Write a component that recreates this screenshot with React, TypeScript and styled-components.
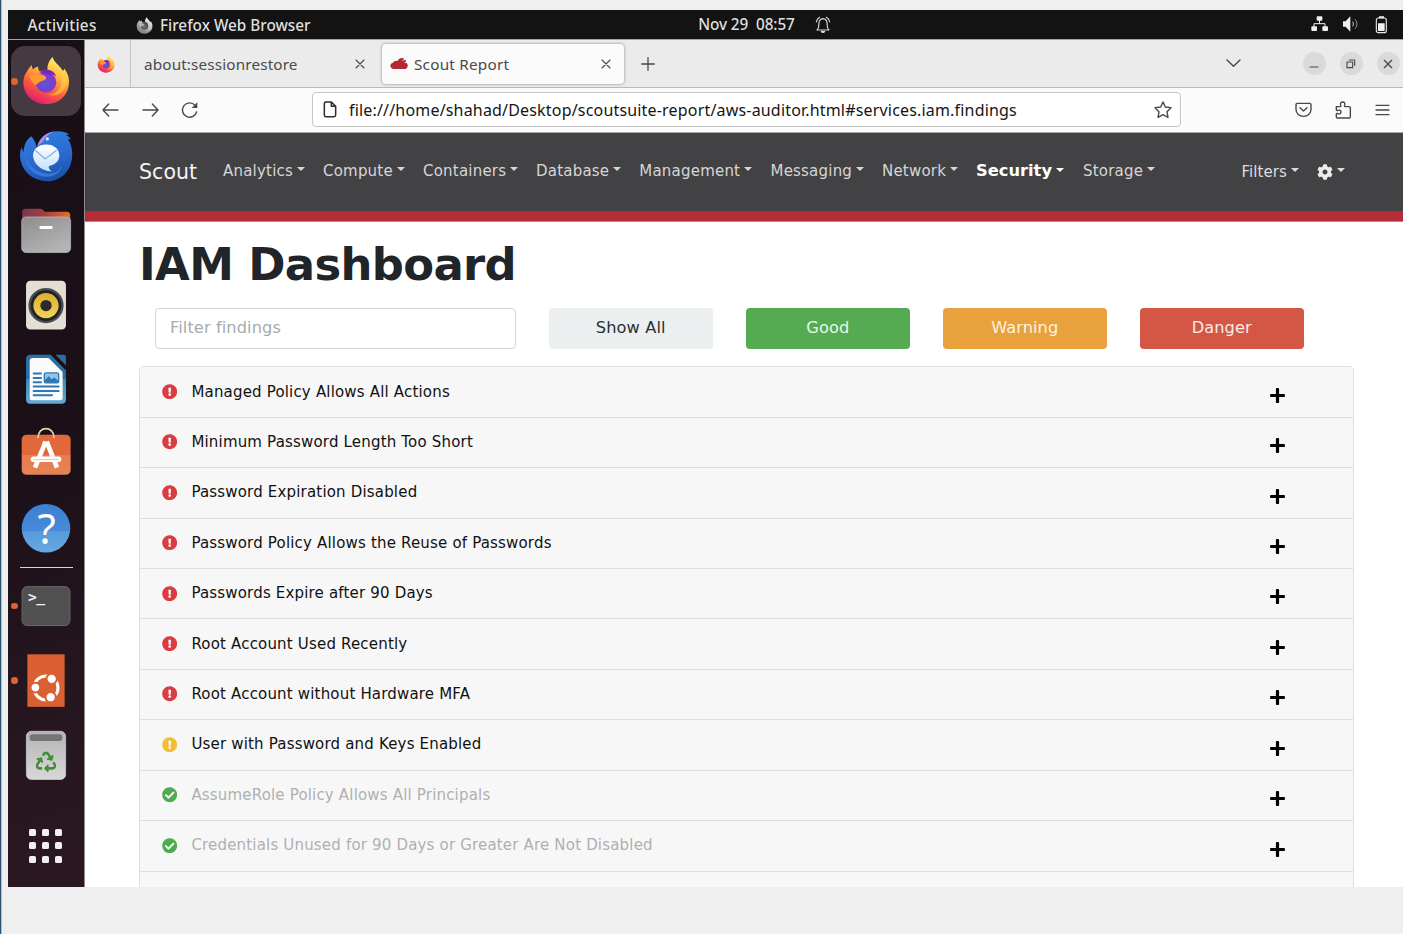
import React from "react";
import styled, { createGlobalStyle } from "styled-components";
import { FaCog, FaExclamationCircle, FaCheckCircle, FaPlus, FaRecycle } from "react-icons/fa";

const GlobalStyle = createGlobalStyle`
  * { box-sizing: border-box; }
  body { margin: 0; background: #fff; overflow: hidden; }
`;

const uiFont = `"Noto Sans", "Open Sans", sans-serif`;
const webFont = `"DejaVu Sans", sans-serif`;

/* ---------- frame ---------- */
const Page = styled.div`
  width: 1403px;
  height: 934px;
  padding: 10px 0 0 7px;
  border-left: 1px solid #2a5674;
  box-shadow: inset 1px 0 0 #b4c1ca;
  background: #efefef;
`;
const Desktop = styled.div`
  height: 877px;
  display: flex;
  flex-direction: column;
  overflow: hidden;
`;
const Label = styled.span<{ $ls?: number }>`
  letter-spacing: ${(p) => p.$ls ?? 0}px;
  white-space: pre;
`;

/* ---------- gnome top bar ---------- */
const TopBar = styled.header`
  flex: none;
  height: 30px;
  padding: 0 15px 1px 19.5px;
  display: grid;
  grid-template-columns: 108.5px 1fr auto auto 1fr;
  align-items: center;
  background: #131313;
  border-bottom: 1px solid #a3a3a3;
  color: #dfdfdf;
  font: 500 15.3px/28px ${uiFont};
`;
const AppName = styled.div`
  display: flex;
  align-items: center;
  gap: 7px;
`;
const Clock = styled.div`
  margin-left: 5px;
  padding-bottom: 2px;
`;
const Bell = styled.div`
  margin-left: 20px;
  display: flex;
`;
const Tray = styled.div`
  display: flex;
  justify-content: flex-end;
  gap: 15px;
`;

/* ---------- dock ---------- */
const Body = styled.div`
  flex: 1;
  min-height: 0;
  display: flex;
`;
const Dock = styled.nav`
  flex: none;
  width: 77px;
  padding-top: 4px;
  background: linear-gradient(160deg, #180e16 0%, #1b1018 45%, #24151f 75%, #2b1822 100%);
  border-right: 1px solid #8f8a8e;
`;
const Slot = styled.div`
  position: relative;
  width: 76px;
  height: 74.5px;
  svg { display: block; }
`;
const Highlight = styled.div`
  position: absolute;
  left: 3px;
  top: 2px;
  width: 70px;
  height: 70px;
  border-radius: 14px;
  background: #453a42;
`;
const Glyph = styled.div`
  position: absolute;
  inset: 0;
`;
const RunDot = styled.i`
  position: absolute;
  left: 3px;
  top: 34px;
  width: 6.5px;
  height: 6.5px;
  border-radius: 50%;
  background: #e0622f;
`;
const Divider = styled.div`
  height: 1px;
  width: 53px;
  margin: 1.5px 0 0.8px 12px;
  background: #d7d3d6;
`;
const AppsGrid = styled.div`
  margin: 37px 0 0 21px;
  display: grid;
  grid-template-columns: repeat(3, 7px);
  gap: 6.2px;
  i { height: 7px; background: #f1eff0; border-radius: 1.6px; }
`;

/* ---------- firefox chrome ---------- */
const Browser = styled.main`
  flex: 1;
  min-width: 0;
  display: flex;
  flex-direction: column;
  background: #fff;
`;
const TabStrip = styled.div`
  flex: none;
  height: 48px;
  display: flex;
  align-items: center;
  background: #ebebeb;
  border-bottom: 1px solid #b9b9b9;
  color: #4a4a4b;
  font: 15.3px/20px ${uiFont};
`;
const PinnedTab = styled.div`
  width: 46px;
  height: 47px;
  padding: 0 0 0 12px;
  display: flex;
  align-items: center;
  border-right: 1px solid #c4c4c4;
`;
const Tab = styled.div<{ $active?: boolean }>`
  width: ${(p) => (p.$active ? 242 : 251)}px;
  height: 40px;
  padding: ${(p) => (p.$active ? "0 13px 0 8px" : "0 17px 0 13px")};
  display: flex;
  align-items: center;
  border-radius: 4px;
  background: ${(p) => (p.$active ? "#fbfbfb" : "transparent")};
  box-shadow: ${(p) => (p.$active ? "0 0 3px rgba(0,0,0,.45)" : "none")};
  svg:last-child { margin-left: auto; }
`;
const Favicon = styled.span`
  display: flex;
  margin-right: 6px;
`;
const NewTab = styled.div`
  display: flex;
  margin-left: 17px;
`;
const WindowTools = styled.div`
  margin-left: auto;
  margin-right: 3px;
  display: flex;
  align-items: center;
  gap: 13.5px;
`;
const TabsMenu = styled.div`
  display: flex;
  margin-right: 48.5px;
`;
const WindowButton = styled.div`
  width: 23.5px;
  height: 23.5px;
  border-radius: 50%;
  background: #dadada;
  display: flex;
  align-items: center;
  justify-content: center;
`;
const Toolbar = styled.div`
  flex: none;
  height: 45px;
  padding: 0 13px 1px 17px;
  display: flex;
  align-items: center;
  background: #fbfbfb;
  border-bottom: 1px solid #a6a6a7;
`;
const NavButtons = styled.div`
  display: flex;
  gap: 22.5px;
  width: 210px;
`;
const UrlBox = styled.div`
  width: 869px;
  height: 35px;
  padding: 0 8px 0 10px;
  display: flex;
  align-items: center;
  border: 1px solid #c6c6c6;
  border-radius: 4px;
  background: #fff;
  color: #151515;
  font: 16px/30px ${uiFont};
  svg:last-child { margin-left: auto; }
`;
const UrlText = styled.div`
  margin-left: 12px;
`;
const ToolbarEnd = styled.div`
  margin-left: auto;
  display: flex;
  align-items: center;
  gap: 23px;
`;

/* ---------- scout report ---------- */
const ScoutNav = styled.div`
  flex: none;
  height: 88px;
  padding: 0 58px 0 54px;
  display: flex;
  align-items: center;
  background: #424244;
  border-bottom: 10px solid #b42c35;
  box-shadow: 0 1px 0 #d27a80;
  color: #d6d6d6;
  font: 15px/20px ${webFont};
`;
const Brand = styled.div`
  width: 84px;
  padding-bottom: 1px;
  color: #f3f3f3;
  font-size: 20.5px;
`;
const NavItem = styled.div<{ $bold?: boolean; $w?: number }>`
  display: flex;
  align-items: center;
  flex: none;
  width: ${(p) => (p.$w ? p.$w + "px" : "auto")};
  padding-bottom: ${(p) => (p.$bold ? 2 : 3)}px;
  font-weight: ${(p) => (p.$bold ? 700 : 400)};
  font-size: ${(p) => (p.$bold ? 16.3 : 15)}px;
  color: ${(p) => (p.$bold ? "#fff" : "inherit")};
  &::after {
    content: "";
    margin: -3px 0 0 4px;
    border: 4.5px solid transparent;
    border-top-color: currentColor;
    border-bottom: 0;
  }
`;
const NavEnd = styled.div`
  margin-left: auto;
  display: flex;
  align-items: center;
  color: #dcdcdc;
  gap: 18px;
  > div { padding-bottom: 1px; }
`;
const Content = styled.section`
  padding: 0 50px 0 54px;
  font-family: ${webFont};
`;
const Title = styled.h1`
  margin: 15.5px 0 0;
  font: 700 44.9px/56px ${webFont};
  color: #212529;
`;
const FilterRow = styled.div`
  display: grid;
  grid-template-columns: 361px repeat(4, 164.5px);
  column-gap: 32.5px;
  margin: 15.5px 0 17.3px 16px;
  height: 41px;
`;
const SearchField = styled.div`
  padding: 0 14px 2px;
  display: flex;
  align-items: center;
  border: 1px solid #ced6da;
  border-radius: 4px;
  color: #a3acae;
  font-size: 16.2px;
`;
const FilterButton = styled.div<{ $bg: string; $fg: string }>`
  display: flex;
  align-items: center;
  justify-content: center;
  padding-bottom: 2px;
  border-radius: 4px;
  background: ${(p) => p.$bg};
  color: ${(p) => p.$fg};
  font-size: 16.2px;
`;
const FindingList = styled.div`
  width: 1215px;
  border: 1px solid #dfdfdf;
  border-radius: 4px;
`;
const Finding = styled.div<{ $muted?: boolean }>`
  height: 50.43px;
  padding: 0 67.5px 1px 22px;
  display: flex;
  align-items: center;
  background: #f7f7f7;
  border-bottom: 1px solid #dfdfdf;
  font-size: 15px;
  color: ${(p) => (p.$muted ? "#b0b0b0" : "#111")};
  > svg:last-child { margin: 7.5px 0 0 auto; }
`;
const FindingName = styled.div`
  margin-left: 14px;
`;

/* ---------- drawings ---------- */
const Firefox = ({ w, h, vb, gray, id }: { w: number; h: number; vb: string; gray?: boolean; id: string }) => (
  <svg width={w} height={h} viewBox={vb}>
    <defs>
      <linearGradient id={id + "Body"} x1="0.75" y1="0.05" x2="0.3" y2="1">
        <stop offset="0" stopColor={gray ? "#f2f2f2" : "#fff36a"} />
        <stop offset=".35" stopColor={gray ? "#c8c8c8" : "#ffb13b"} />
        <stop offset=".65" stopColor={gray ? "#9a9a9a" : "#fb5b3f"} />
        <stop offset="1" stopColor={gray ? "#808080" : "#e01a72"} />
      </linearGradient>
      <radialGradient id={id + "Globe"} cx=".45" cy=".6" r=".65">
        <stop offset="0" stopColor={gray ? "#777" : "#5d55d8"} />
        <stop offset="1" stopColor={gray ? "#3a3a3a" : "#8b2fc9"} />
      </radialGradient>
    </defs>
    <path fill={`url(#${id}Body)`} d="M-68 4C-68-18-57-32-43-49Q-42-40-39-36-32-42-24-44-24-36-20-30C-12-33-3-33 5-31 2-48 10-64 20-73 24-56 40-50 49-33 54-30 55-37 55-38 68-20 70-6 69 6 67 44 36 69 1 69-38 69-68 42-68 4Z" />
    <circle cx="0" cy="3" r="31" fill={`url(#${id}Globe)`} />
    <path fill={gray ? "#555" : "#7a25bd"} d="M-20-27C-2-42 26-34 31-14 20-25 8-20 0-21Z" />
    <path fill={gray ? "#b5b5b5" : "#ff9a2b"} d="M-50-18C-38-22-22-20-19-20-10-21 0-15 1-10-2-2-14-1-19 2-26 6-27 9-31 12-42 6-48-8-50-18Z" />
    <path fill={gray ? "#ddd" : "#ffd548"} opacity=".55" d="M20-68C24-50 50-34 48 2 44 28 22 42 4 40 40 52 66 24 62-10 54-36 28-50 20-68Z" />
  </svg>
);

const DVB = "-114 -112 228 224";
const DockSvg = ({ children }: { children: React.ReactNode }) => (
  <svg width="76" height="74.5" viewBox={DVB}>{children}</svg>
);

const Thunderbird = () => (
  <DockSvg>
    <defs>
      <linearGradient id="bird" x1=".3" y1="0" x2=".6" y2="1">
        <stop offset="0" stopColor="#2f7fe0" /><stop offset=".6" stopColor="#2a68cf" /><stop offset="1" stopColor="#1b4fa3" />
      </linearGradient>
      <linearGradient id="envelope" x1="0" y1="0" x2="0" y2="1">
        <stop offset="0" stopColor="#fff" /><stop offset="1" stopColor="#bfe0fb" />
      </linearGradient>
    </defs>
    <path fill="url(#bird)" d="M-27-22C-24-48-4-73 30-75 44-76 60-73 70-66L60-64Q70-60 75-50L66-52C84-26 82 14 68 38 52 66 24 76 2 75-34 74-62 54-73 24-80 4-79-12-74-27L-68-12C-66-36-58-50-44-60-36-50-30-40-27-22Z" />
    <path fill="#a78bf0" d="M-27-28C-20-56 2-73 24-74 8-68-4-56-8-44-14-40-20-36-27-28Z" />
    <path fill="#3f86e4" opacity=".7" d="M-62-6C-58 24-36 46-2 52 30 54 46 40 50 20 48 46 30 60 2 62-36 60-62 34-62-6Z" />
    <path fill="url(#envelope)" d="M0-35C26-35 40-20 40-2 40 16 26 26 8 30 8 38 12 42 18 46-14 44-38 24-39-2-38-22-22-35 0-35Z" />
    <path fill="none" stroke="#8ab4dc" strokeWidth="4" d="M-32-18Q-10 2-2 8 6 2 32-18" />
    <circle cx="4" cy="-52" r="5" fill="#cde8ff" />
  </DockSvg>
);

const Files = () => (
  <DockSvg>
    <defs>
      <linearGradient id="folder" x1="0" x2="1"><stop offset="0" stopColor="#793452" /><stop offset=".5" stopColor="#a6423d" /><stop offset="1" stopColor="#ec6a30" /></linearGradient>
      <linearGradient id="drawer" x1="0" x2=".6" y1="0" y2="1"><stop offset="0" stopColor="#8d8d8d" /><stop offset="1" stopColor="#b4b4b4" /></linearGradient>
    </defs>
    <path fill="url(#folder)" d="M-72-54Q-72-65-62-65H-16Q-10-65-4-56H62Q73-56 73-44V0H-72Z" />
    <rect x="-73" y="-40" width="147" height="107" rx="13" fill="url(#drawer)" stroke="#c2c2c2" strokeWidth="2" />
    <rect x="-20" y="-13" width="40" height="9" rx="4" fill="#fff" />
  </DockSvg>
);

const Rhythmbox = () => (
  <DockSvg>
    <defs><linearGradient id="cone" x1="0" x2="0" y1="0" y2="1"><stop offset="0" stopColor="#dcae30" /><stop offset="1" stopColor="#f2d457" /></linearGradient></defs>
    <rect x="-60" y="-74" width="120" height="147" rx="13" fill="#e3dfd5" />
    <circle cy="1" r="53" fill="#4b4d52" /><circle cy="1" r="46" fill="#20222a" />
    <circle cy="1" r="38" fill="url(#cone)" /><circle cy="1" r="17" fill="#2b2b2b" />
  </DockSvg>
);

const Writer = () => (
  <DockSvg>
    <defs><linearGradient id="writer" x1="0" x2="0" y1="0" y2="1"><stop offset=".5" stopColor="#276fa5" /><stop offset=".5" stopColor="#3e8abd" /><stop offset="1" stopColor="#62abd6" /></linearGradient></defs>
    <path fill="url(#writer)" d="M-48-74H14L60-26V60Q60 74 46 74H-46Q-60 74-60 60V-60Q-60-74-48-74Z" />
    <path fill="#fafafa" d="M-40-64H8L50-22V56Q50 63 43 63H-43Q-49 63-49 56V-55Q-49-64-40-64Z" />
    <path fill="#2c6da1" d="M28-74H54Q60-74 60-68V-42Z" />
    <path stroke="#2e77b5" strokeWidth="6" strokeLinecap="round" d="M-37-17H-15M-37-4H-15M-37 9H-15M-37 22H38M-37 35H38M-37 48H18" />
    <rect x="-5" y="-19" width="43" height="30" rx="5" fill="#8ec4ea" stroke="#2e77b5" strokeWidth="4" />
    <path fill="#2e77b5" d="M-3 10V2L8-9 17 0 25-5 36 4V10Z" />
  </DockSvg>
);

const Software = () => (
  <DockSvg>
    <defs><linearGradient id="bag" x1="0" x2="0" y1="0" y2="1"><stop offset=".5" stopColor="#e0683a" /><stop offset=".5" stopColor="#e67d50" /><stop offset="1" stopColor="#e68354" /></linearGradient></defs>
    <rect x="-73" y="-59" width="147" height="121" rx="15" fill="url(#bag)" />
    <path fill="none" stroke="#e8d3a4" strokeWidth="5" strokeLinecap="round" d="M-24-50C-24-86 24-86 24-50" />
    <path fill="none" stroke="#fff" strokeWidth="14" d="M-33 40-1-38M33 40 2-38" />
    <path fill="#fff" d="M-10-38H10V-26H-10Z" />
    <rect x="-46" y="7" width="92" height="16" rx="8" fill="#fff" />
    <path stroke="#ecc3b0" strokeWidth="3" d="M-38 16H38" />
  </DockSvg>
);

const HelpMark = styled.span`
  position: absolute;
  inset: 0 0 0 1px;
  display: flex;
  align-items: center;
  justify-content: center;
  color: #fff;
  font: 42px/1 ${uiFont};
`;
const Help = () => (
  <>
    <DockSvg>
      <defs><linearGradient id="help" x1="0" x2="0" y1="0" y2="1"><stop offset="0" stopColor="#3a80d3" /><stop offset=".55" stopColor="#478bd8" /><stop offset=".55" stopColor="#559adb" /><stop offset="1" stopColor="#66a9e1" /></linearGradient></defs>
      <circle r="73" fill="url(#help)" />
    </DockSvg>
    <HelpMark>?</HelpMark>
  </>
);

const Prompt = styled.span`
  position: absolute;
  left: 20px;
  top: 19px;
  color: #f2f2f2;
  font: 700 14.5px/18px "DejaVu Sans Mono", monospace;
  letter-spacing: -0.6px;
`;
const Terminal = () => (
  <>
    <DockSvg><rect x="-72" y="-59" width="144" height="117" rx="15" fill="#505050" stroke="#696969" strokeWidth="3" /></DockSvg>
    <Prompt>&gt;_</Prompt>
  </>
);

const UbuntuLogo = () => (
  <DockSvg>
    <rect x="-56" y="-78" width="112" height="158" fill="#da6033" />
    <g transform="translate(0 23)">
      <circle r="36" fill="none" stroke="#fff" strokeWidth="9" />
      <g stroke="#da6033" fill="#fff" strokeWidth="6">
        <circle cx="-32" cy="-1" r="14.500" /><circle cx="17" cy="-27" r="15.500" /><circle cx="14" cy="28" r="15.500" />
      </g>
    </g>
  </DockSvg>
);

const Trash = () => (
  <DockSvg>
    <defs><linearGradient id="bin" x1="0" x2="0" y1="0" y2="1"><stop offset="0" stopColor="#b4b4b4" /><stop offset="1" stopColor="#d8d8d8" /></linearGradient></defs>
    <rect x="-59" y="-72" width="118" height="145" rx="15" fill="url(#bin)" stroke="#dadada" strokeWidth="2" />
    <rect x="-49" y="-63" width="98" height="20" rx="8" fill="#757575" />
    <FaRecycle x="-31" y="-11" size={62} color="#3f9136" />
  </DockSvg>
);

/* thin outline glyph drawn on a 3x grid */
const Line = ({ w, h, d, sw = 4.2, c = "#48484a" }: { w: number; h: number; d: string; sw?: number; c?: string }) => (
  <svg width={w} height={h} viewBox={`0 0 ${w * 3} ${h * 3}`} fill="none" stroke={c} strokeWidth={sw} strokeLinecap="round" strokeLinejoin="round"><path d={d} /></svg>
);
const CloseX = () => <Line w={10} h={10} sw={3.2} d="M3 3 27 27M27 3 3 27" />;

type DockEntry = { icon: React.ReactNode; active?: boolean; running?: boolean };
const dock: DockEntry[] = [
  { icon: <Firefox id="dock" w={76} h={74.5} vb={DVB} />, active: true, running: true },
  { icon: <Thunderbird /> }, { icon: <Files /> }, { icon: <Rhythmbox /> },
  { icon: <Writer /> }, { icon: <Software /> }, { icon: <Help /> },
];
const dockRunning: DockEntry[] = [
  { icon: <Terminal />, running: true }, { icon: <UbuntuLogo />, running: true }, { icon: <Trash /> },
];
const DockItem = ({ icon, active, running }: DockEntry) => (
  <Slot>{active && <Highlight />}<Glyph>{icon}</Glyph>{running && <RunDot />}</Slot>
);

const menus: [string, number][] = [
  ["Analytics", 100], ["Compute", 100], ["Containers", 113], ["Database", 103.3], ["Management", 131.2],
  ["Messaging", 111.5], ["Network", 94], ["Security", 107], ["Storage", 80],
];
const findings: [string, "danger" | "warning" | "good"][] = [
  ["Managed Policy Allows All Actions", "danger"],
  ["Minimum Password Length Too Short", "danger"],
  ["Password Expiration Disabled", "danger"],
  ["Password Policy Allows the Reuse of Passwords", "danger"],
  ["Passwords Expire after 90 Days", "danger"],
  ["Root Account Used Recently", "danger"],
  ["Root Account without Hardware MFA", "danger"],
  ["User with Password and Keys Enabled", "warning"],
  ["AssumeRole Policy Allows All Principals", "good"],
  ["Credentials Unused for 90 Days or Greater Are Not Disabled", "good"],
];

export default function App() {
  return (
    <>
      <GlobalStyle />
      <Page>
        <Desktop>
          <TopBar>
            <Label $ls={0.33}>Activities</Label>
            <AppName><Firefox id="app" gray w={17} h={17} vb="-74 -76 148 148" /><Label>Firefox Web Browser</Label></AppName>
            <Clock><Label $ls={-0.08}>Nov 29  08:57</Label></Clock>
            <Bell>
              <svg width="16" height="18" viewBox="0 0 48 54" fill="none" stroke="#dedede" strokeWidth="3.4" strokeLinecap="round" strokeLinejoin="round">
                <path d="M6 42C13 36 11 28 12 20Q14 9 24 8 34 9 36 20C37 28 35 36 42 42ZM4 18Q6 8 14 4M44 18Q42 8 34 4" />
                <path d="M19 47Q24 52 29 47Z" fill="#dedede" />
              </svg>
            </Bell>
            <Tray>
              <svg width="17" height="16" viewBox="0 0 51 48" fill="#f0f0f0"><rect x="17" y="1" width="17" height="13" rx="3" /><rect x="1" y="31" width="17" height="14" rx="3" /><rect x="34" y="31" width="17" height="14" rx="3" /><path fill="none" stroke="#f0f0f0" strokeWidth="3" d="M25.500 12V23M9 33V23H42V33" /></svg>
              <svg width="17" height="16" viewBox="3 0 51 48"><path fill="#f0f0f0" d="M3 16H11L25 1V47L11 32H3Z" /><path fill="none" stroke="#ccc" strokeWidth="3" d="M32 17Q37 24 32 31" /><path fill="none" stroke="#999" strokeWidth="3" d="M39 10Q51 24 39 38" /></svg>
              <svg width="13" height="18" viewBox="0 0 39 54"><path fill="#f0f0f0" d="M12 1H27V7H12ZM9 22H29V45H9Z" /><rect x="4" y="6" width="30" height="44" rx="6" fill="none" stroke="#e6e6e6" strokeWidth="3.4" /></svg>
            </Tray>
          </TopBar>
          <Body>
            <Dock>
              {dock.map((d, i) => <DockItem key={i} {...d} />)}
              <Divider />
              {dockRunning.map((d, i) => <DockItem key={i} {...d} />)}
              <AppsGrid>{Array.from({ length: 9 }, (_, i) => <i key={i} />)}</AppsGrid>
            </Dock>
            <Browser>
              <TabStrip>
                <PinnedTab><Firefox id="pinned" w={18} h={18} vb="-74 -76 148 148" /></PinnedTab>
                <Tab><Label $ls={0.13}>about:sessionrestore</Label><CloseX /></Tab>
                <Tab $active>
                  <Favicon><svg width="18" height="13" viewBox="0 0 54 39"><path fill="#b32a34" d="M10 36C-2 34-1 19 8 18 12 12 18 10 23 12 26 3 38 1 43 6L34 13 46 8Q48 10 48 14L42 17 50 18C56 24 53 34 46 36Z" /></svg></Favicon>
                  <Label $ls={0.22}>Scout Report</Label><CloseX />
                </Tab>
                <NewTab><Line w={14} h={14} sw={3.8} d="M21 2V40M2 21H40" /></NewTab>
                <WindowTools>
                  <TabsMenu><Line w={15} h={9} d="M3 3 22.500 22 42 3" /></TabsMenu>
                  <WindowButton><Line w={10} h={10} sw={3} d="M3 24H27" /></WindowButton>
                  <WindowButton><Line w={10} h={10} sw={3.4} d="M3 9H20V26H3ZM10 3H26V19" /></WindowButton>
                  <WindowButton><Line w={10} h={10} sw={4} d="M4 4 26 26M26 4 4 26" /></WindowButton>
                </WindowTools>
              </TabStrip>
              <Toolbar>
                <NavButtons>
                  <Line w={17} h={18} d="M20 9 3 27 20 45M3 27H48" />
                  <Line w={17} h={18} d="M31 9 48 27 31 45M48 27H3" />
                  <svg width="18" height="18" viewBox="0 0 54 54" fill="none" stroke="#48484a" strokeWidth="4.2"><path d="M42 13A21.500 21.500 0 1 0 47 31" /><path fill="#48484a" stroke="none" d="M49 4V21H32Z" /></svg>
                </NavButtons>
                <UrlBox>
                  <Line w={14} h={17} sw={4.5} c="#2b2b2b" d="M8 3H25L38 16V42Q38 47 33 47H8Q4 47 4 42V8Q4 3 8 3ZM25 3V16H38" />
                  <UrlText><Label $ls={0.18}>file:///home/shahad/Desktop/scoutsuite-report/aws-auditor.html#services.iam.findings</Label></UrlText>
                  <Line w={18} h={18} d="M27 3 34 18 51 20 39 32 42 49 27 41 12 49 15 32 3 20 20 18Z" />
                </UrlBox>
                <ToolbarEnd>
                  <Line w={17} h={17} d="M7 7H44Q48 7 48 11V25C48 38 38 46 25.500 46 13 46 3 38 3 25V11Q3 7 7 7ZM15 20 25.500 30 36 20" />
                  <Line w={17} h={18} d="M4 17H15C18 17 18 14 17 12 15 7 18 3 23 3S31 7 29 12C28 14 28 17 31 17H43Q46 17 46 20V48Q46 51 43 51H7Q4 51 4 48V40C4 37 7 37 9 38 14 40 18 37 18 33S14 26 9 28C7 29 4 29 4 26Z" />
                  <Line w={15} h={16} sw={3.8} d="M3 10H42M3 24H42M3 38H42" />
                </ToolbarEnd>
              </Toolbar>
              <ScoutNav>
                <Brand><Label $ls={0.05}>Scout</Label></Brand>
                {menus.map(([m, w]) => <NavItem key={m} $w={w} $bold={m === "Security"}><Label $ls={m === "Security" ? 0 : 0.21}>{m}</Label></NavItem>)}
                <NavEnd>
                  <NavItem><Label $ls={0.08}>Filters</Label></NavItem>
                  <NavItem><FaCog size={16} color="#ececec" /></NavItem>
                </NavEnd>
              </ScoutNav>
              <Content>
                <Title><Label $ls={-0.65}>IAM Dashboard</Label></Title>
                <FilterRow>
                  <SearchField><Label $ls={0.1}>Filter findings</Label></SearchField>
                  <FilterButton $bg="#ebeff0" $fg="#2a2f33"><Label $ls={0.12}>Show All</Label></FilterButton>
                  <FilterButton $bg="#55ab52" $fg="#e9f5e8"><Label $ls={0.1}>Good</Label></FilterButton>
                  <FilterButton $bg="#e8a13c" $fg="#fdf3e2"><Label $ls={0.08}>Warning</Label></FilterButton>
                  <FilterButton $bg="#d45746" $fg="#fbeae8"><Label $ls={0.08}>Danger</Label></FilterButton>
                </FilterRow>
                <FindingList>
                  {findings.map(([name, level]) => (
                    <Finding key={name} $muted={level === "good"}>
                      {level === "good" ? <FaCheckCircle size={15.4} color="#4fab50" /> : <FaExclamationCircle size={15.4} color={level === "danger" ? "#dc3b42" : "#f3bd35"} />}
                      <FindingName><Label $ls={0.18}>{name}</Label></FindingName>
                      <FaPlus size={17} color="#000" />
                    </Finding>
                  ))}
                  <Finding />
                </FindingList>
              </Content>
            </Browser>
          </Body>
        </Desktop>
      </Page>
    </>
  );
}
